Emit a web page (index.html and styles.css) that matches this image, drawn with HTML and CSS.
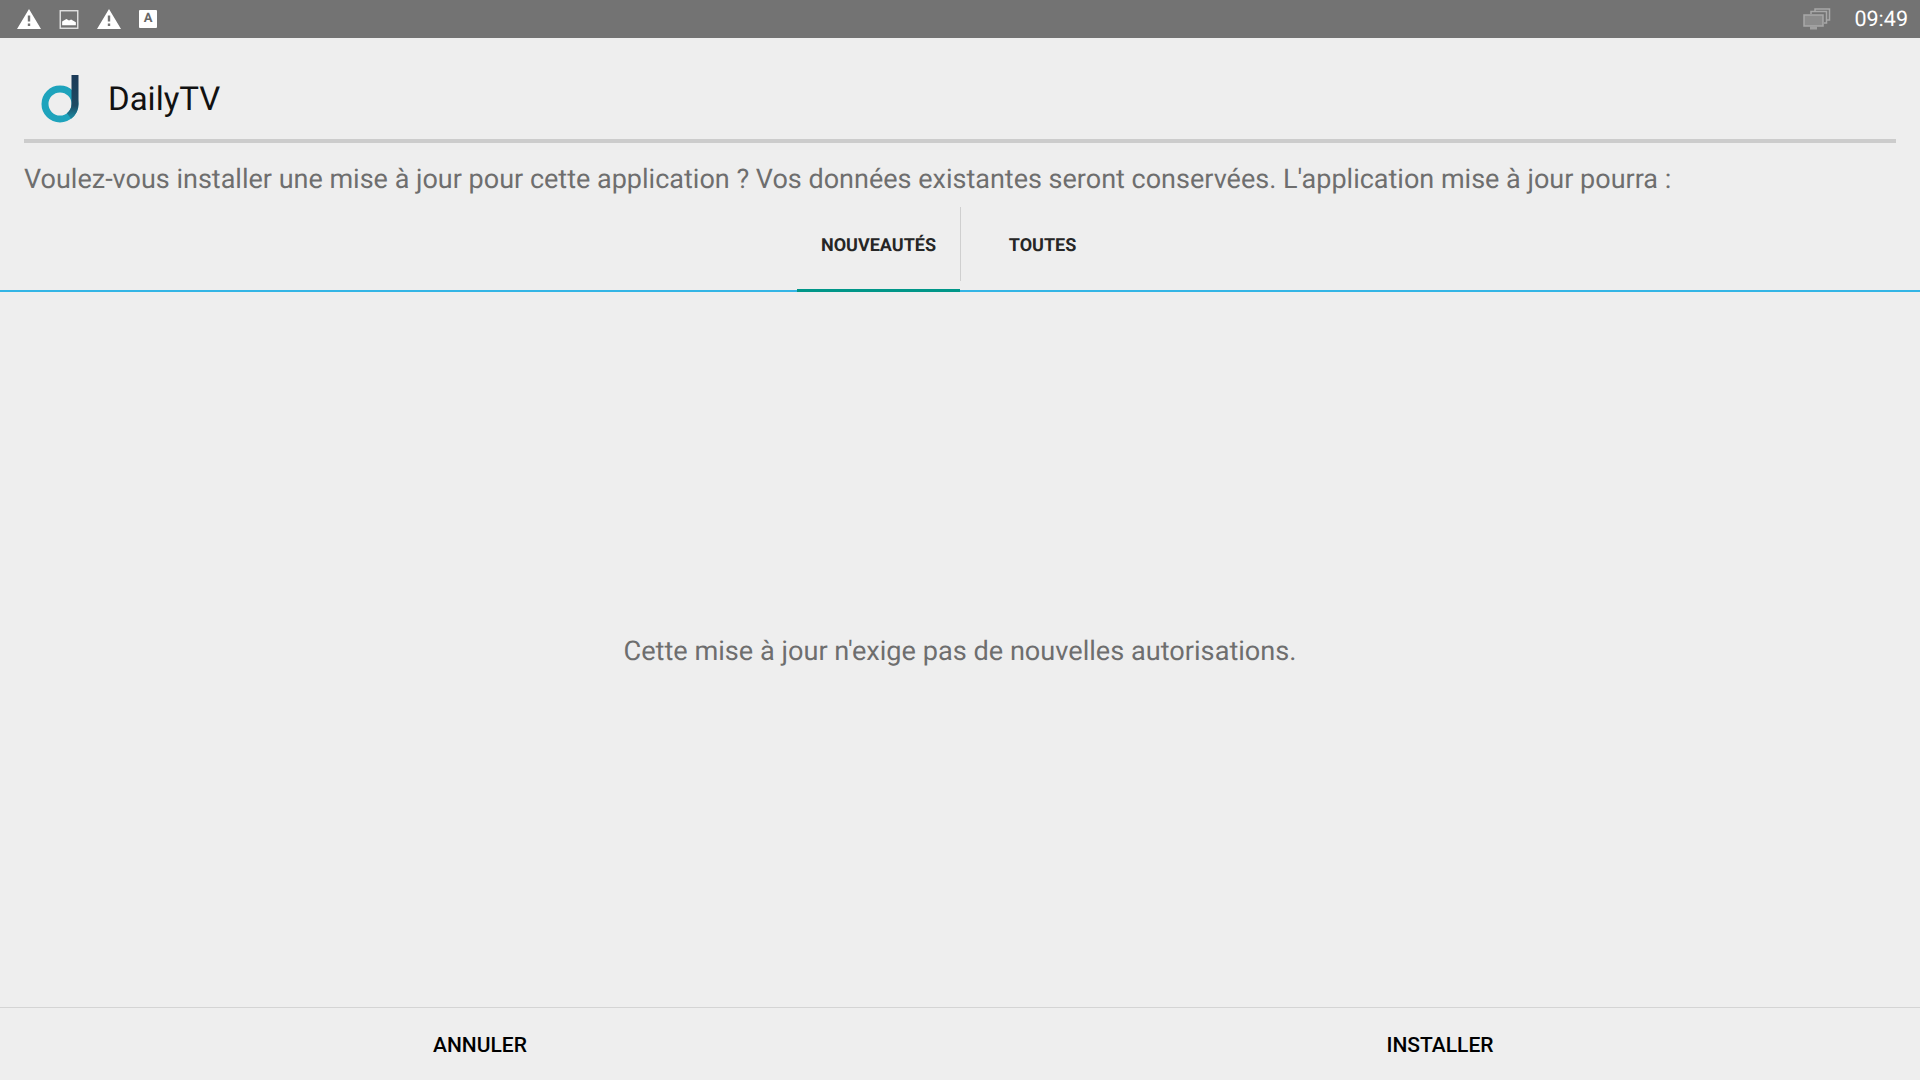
FILE: index.html
```html
<!DOCTYPE html>
<html lang="fr">
<head>
  <meta charset="utf-8">
  <title>DailyTV</title>
  <link rel="stylesheet" href="styles.css">
</head>
<body>
<div class="status-bar">
  <div class="status-icons">
    <svg class="ic-warn" viewBox="0 0 24 20"><path fill="#fff" fill-rule="evenodd" d="M12 0 L24 20 H0 Z M10.800 6.500 V12.500 H13.200 V6.500 Z M10.800 14.500 V17 H13.200 V14.500 Z"/></svg>
    <svg class="ic-pic" viewBox="0 0 18 18"><rect x="0.700" y="0.700" width="16.600" height="16.600" fill="none" stroke="#e4e4e4" stroke-width="1.300"/><path fill="#fff" d="M2.500 14.500 V11 L6.500 8.500 L9 10 L11 9 L15.500 11.500 V14.500 Z"/></svg>
    <svg class="ic-warn" viewBox="0 0 24 20"><path fill="#fff" fill-rule="evenodd" d="M12 0 L24 20 H0 Z M10.800 6.500 V12.500 H13.200 V6.500 Z M10.800 14.500 V17 H13.200 V14.500 Z"/></svg>
    <div class="ic-a">A</div>
  </div>
  <div class="status-right">
    <svg class="ic-screens" viewBox="0 0 28 22"><path fill="none" stroke="#a8a8a8" stroke-width="1.500" d="M12 3 V1 H26.500 V12 H23"/><path fill="none" stroke="#a8a8a8" stroke-width="1.500" d="M8 6 V3.500 H23.500 V15 H21"/><rect x="1" y="7" width="19" height="11" fill="#8c8c8c" stroke="#a8a8a8" stroke-width="1.500"/><rect x="7" y="18.500" width="7" height="3" fill="#a0a0a0"/></svg>
    <span class="clock">09:49</span>
  </div>
</div>

<div class="app-head">
  <svg class="logo" viewBox="0 0 38 48">
    <defs>
      <linearGradient id="stem" x1="0" y1="0" x2="0" y2="1">
        <stop offset="0" stop-color="#1b3a57"/>
        <stop offset="0.750" stop-color="#1d4a63"/>
        <stop offset="1" stop-color="#1c7f97"/>
      </linearGradient>
    </defs>
    <circle cx="19" cy="29" r="15" fill="none" stroke="#1ea3bc" stroke-width="7"/>
    <path fill="none" stroke="url(#stem)" stroke-width="7" d="M34 0 V29 A15 15 0 0 1 28 41"/>
  </svg>
  <span class="app-name">DailyTV</span>
</div>
<div class="head-rule"></div>
<p class="intro">Voulez-vous installer une mise à jour pour cette application ? Vos données existantes seront conservées. L'application mise à jour pourra :</p>

<div class="tabs">
  <div class="tab tab-active">NOUVEAUTÉS</div>
  <div class="tab">TOUTES</div>
</div>

<div class="content">
  <p class="message">Cette mise à jour n'exige pas de nouvelles autorisations.</p>
</div>

<div class="actions">
  <button class="action">ANNULER</button>
  <button class="action">INSTALLER</button>
</div>
</body>
</html>
```

FILE: styles.css
```css
body {
  margin: 0;
  height: 1080px;
  display: flex;
  flex-direction: column;
  background: #eeeeee;
  font-family: Roboto, "Liberation Sans", sans-serif;
  text-rendering: geometricPrecision;
  overflow: hidden;
}
.status-bar {
  height: 38px;
  flex: none;
  display: flex;
  justify-content: space-between;
  align-items: center;
  background: #737373;
}
.status-icons {
  display: flex;
  align-items: center;
  padding-left: 17px;
}
.ic-warn {
  width: 24px;
  height: 20px;
}
.ic-pic {
  width: 20px;
  height: 19px;
  margin: 0 18px 0 18px;
}
.ic-a {
  width: 18px;
  height: 18px;
  margin-left: 18px;
  background: #fff;
  border-radius: 1px;
  color: #666;
  font-size: 13px;
  font-weight: 700;
  line-height: 17px;
  text-align: center;
}
.status-right {
  display: flex;
  align-items: center;
  padding-right: 12px;
  gap: 23px;
}
.ic-screens {
  width: 28px;
  height: 22px;
}
.clock {
  color: #fff;
  font-size: 21.500px;
}
.app-head {
  height: 101px;
  flex: none;
  display: flex;
  align-items: center;
  padding: 21px 0 0 41px;
  box-sizing: border-box;
}
.logo {
  width: 38px;
  height: 48px;
  margin: 0 29px 1px 0;
}
.app-name {
  color: #111111;
  font-size: 33px;
}
.head-rule {
  height: 4px;
  margin: 0 24px;
  flex: none;
  background: #cccccc;
}
.intro {
  margin: 0;
  padding: 18px 24px 0;
  height: 46px;
  flex: none;
  color: #6e6e6e;
  font-size: 27px;
  line-height: 36px;
}
.tabs {
  height: 83px;
  flex: none;
  display: flex;
  justify-content: center;
  padding-left: 1px;
  border-bottom: 2px solid #33b5e5;
}
.tab {
  width: 163px;
  margin-bottom: -2px;
  padding-bottom: 9px;
  display: flex;
  align-items: center;
  justify-content: center;
  color: #262626;
  font-size: 18px;
  font-weight: 700;
  position: relative;
}
.tab-active {
  margin-right: 1px;
}
.tab-active::before {
  content: "";
  position: absolute;
  left: 0;
  right: 0;
  bottom: 0;
  height: 3px;
  background: #009688;
}
.tab-active::after {
  content: "";
  position: absolute;
  right: -1px;
  top: 0;
  bottom: 11px;
  width: 1px;
  background: #cfcfcf;
}
.content {
  flex: 1;
  display: flex;
  align-items: center;
  justify-content: center;
  padding-top: 2px;
}
.message {
  margin: 0;
  color: #6e6e6e;
  font-size: 27.150px;
}
.actions {
  height: 72px;
  flex: none;
  display: flex;
  border-top: 1px solid #d4d4d4;
}
.action {
  flex: 1;
  border: none;
  padding: 2px 0 0;
  background: none;
  color: #000;
  font-family: inherit;
  font-size: 21px;
  font-weight: 500;
}
```
